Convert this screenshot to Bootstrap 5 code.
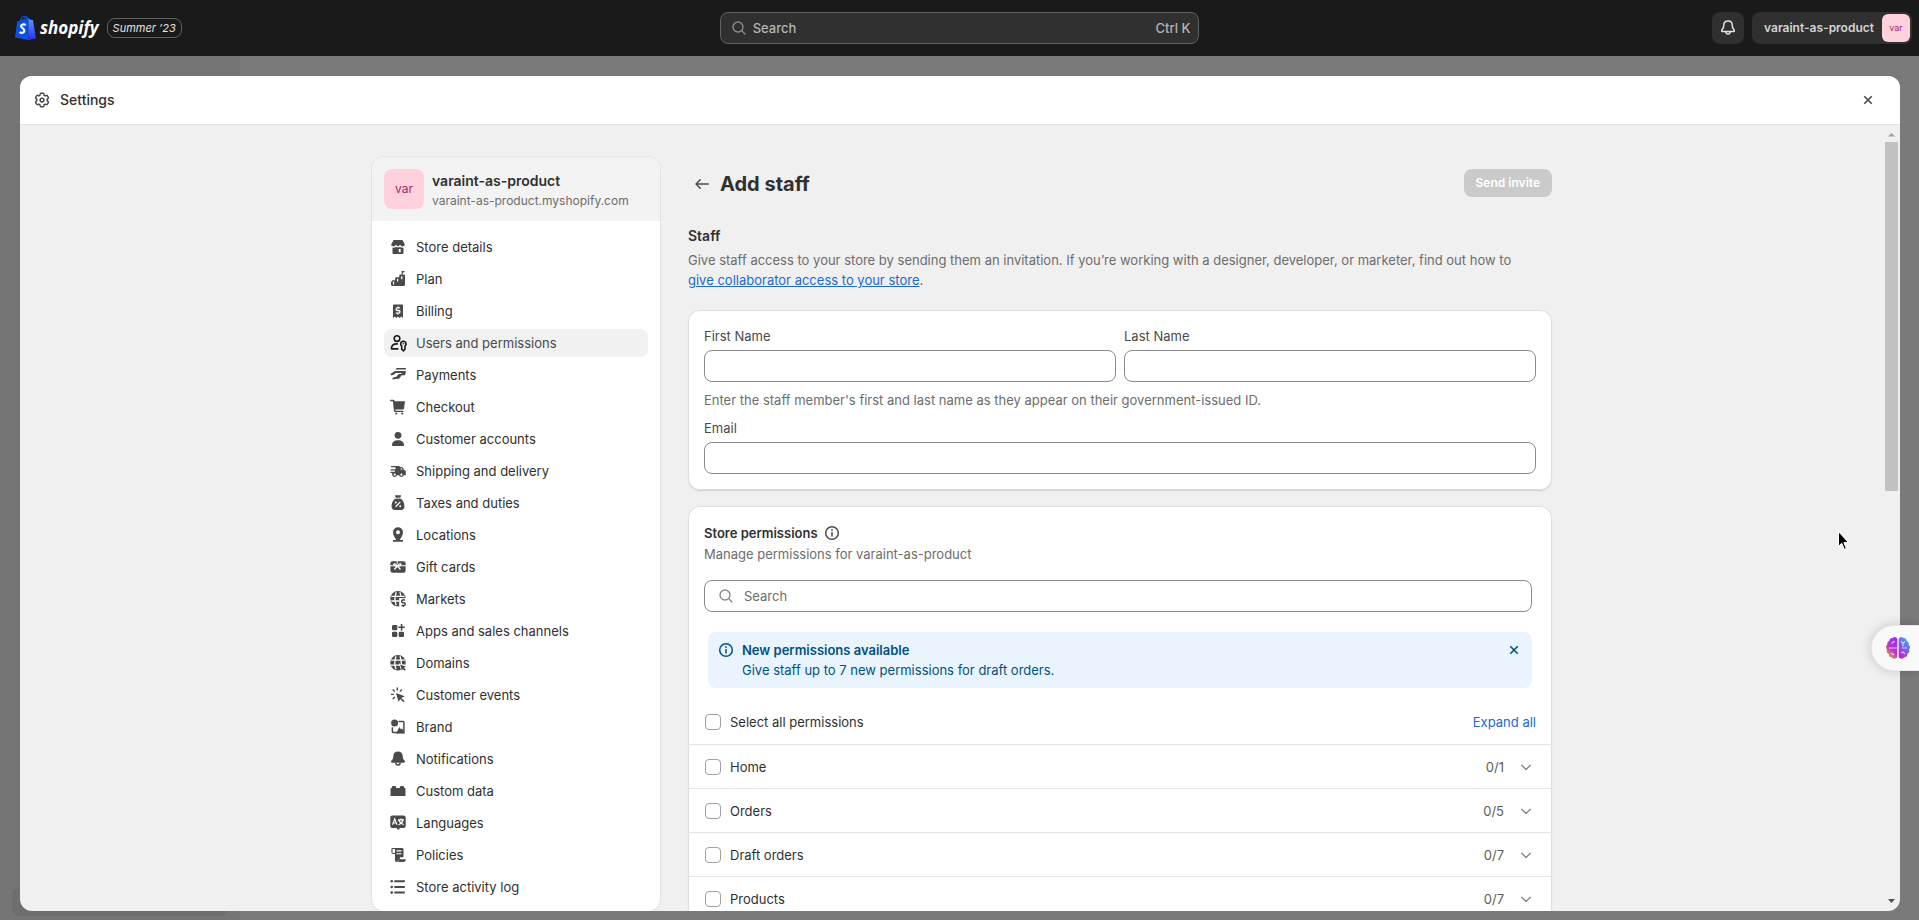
<!DOCTYPE html>
<html lang="en">
<head>
<meta charset="utf-8">
<meta name="viewport" content="width=device-width, initial-scale=1">
<title>Settings - Add staff</title>
<link href="https://cdn.jsdelivr.net/npm/bootstrap@5.3.0/dist/css/bootstrap.min.css" rel="stylesheet">
<style>
body{font-family:Inter,"Liberation Sans",sans-serif;font-size:13px;line-height:20px;color:#303030;background:#7a7a7a}
svg{display:block;flex:none}
.ico{width:20px;height:20px;fill:currentColor}
.topbar{height:56px;background:#1a1a1a;color:#e3e3e3}
.topbar-side{flex:1 1 0;padding:0 7px}
.wordmark{font:italic 700 17px/24px "Open Sans",sans-serif;color:#fff}
.edition{height:20px;line-height:18px;font-size:11px;font-style:italic;border:1px solid #616161;border-radius:8px;padding:0 5px}
.top-search{width:25%;min-width:280px;height:32px;background:#303030;border:1px solid #616161;border-radius:8px;padding:0 8px}
.top-search input{background:transparent;border:0;outline:0;padding:0;color:#b5b5b5;font-size:13px;font-weight:500;min-width:0}
.top-search input::placeholder{color:#b5b5b5;opacity:1}
.top-search kbd{font:500 13px/20px Inter,"Liberation Sans",sans-serif;color:#b5b5b5}
.top-btn{height:32px;border:0;border-radius:8px;background:#303030;color:#e3e3e3}
.account{font-size:12px;font-weight:600;color:#d4d4d4;padding:0 2px 0 12px}
.avatar{background:#ffd1dc;color:#a5266b}
.avatar-sm{width:28px;height:28px;border-radius:6px;font-size:9px;line-height:28px;text-align:center}
.avatar-lg{width:40px;height:40px;border-radius:8px;font-size:12px;line-height:40px;text-align:center}
.backdrop-nav{width:240px;top:56px;bottom:0;left:0;background:#757575}
.backdrop-item{height:28px;margin:0 12px 4px;border-radius:8px;background:#6e6e6e}
.sheet{margin:20px 19px 9px 20px;border-radius:12px;background:#f0f0f0;min-height:0}
.sheet-head{height:49px;background:#fff;border-bottom:1px solid #e3e3e3;padding:0 22px 0 12px}
.plain{border:0;background:transparent;padding:0;color:#4a4a4a}
.scroll-area{padding:32px 0 0 21px}
.layout{max-width:1180px}
.side{width:288px}
.panel{background:#fff;border-radius:12px;box-shadow:inset 0 0 0 1px #dfdfdf,0 1px 1px #cfcfcf}
.side .panel{box-shadow:0 0 0 1px #e2e2e2}
.store-head{background:#f3f3f3;height:64px;padding:0 12px}
.store-url{font-size:12px}
.side-list{padding:12px 12px 10px;display:grid;gap:4px}
.side-list a{height:28px;padding:0 4px;gap:8px;border-radius:8px;color:#303030;text-decoration:none}
.side-list a .ico{color:#4a4a4a}
.side-list a.active{background:#f1f1f1;color:#4a4a4a}
.side-list a.active .ico{color:#1a1a1a}
.main-head{min-height:30px;margin-top:12px}
h1{font-size:20px;line-height:28px;font-weight:700}
.intro{padding:27px 0 20px}
.h-sec{font-size:14px;line-height:20px;font-weight:600}
.h-small{font-size:13px;line-height:20px;font-weight:600}
.perm-title{height:22px}
.sub{color:#6d6d6d}
.lbl{color:#4a4a4a}
.muted-ico{color:#8a8a8a}
.blue{color:#1a69d4}
.invite{height:28px;border:0;border-radius:8px;background:#cacaca;color:#fff;font-size:12px;font-weight:600;padding:0 12px}
.field{height:32px;border:1px solid #8a8a8a;border-radius:8px;background:#fff;font-size:13px;padding:0 12px}
.field:focus{box-shadow:none}
.search-field{gap:8px;padding:0 12px 0 11px}
.search-field input{border:0;outline:0;padding:0;min-width:0}
.search-field input::placeholder{color:#6d6d6d;opacity:1}
.notice{background:#eaf4ff;color:#00527c;border-radius:8px;padding:8px;gap:6px;margin:20px 0 0 4px}
.perm-list{margin-top:12px}
.perm{height:44px;padding:0 16px 0 17px}
.perm + .perm{border-top:1px solid #e3e3e3}
.perm label{padding-left:9px}
.perm .form-check-input{width:16px;height:16px;margin:0;border:1px solid #a0a0a0;border-radius:4px}
.count{color:#5c5c5c;margin-right:12px}
.chev{color:#8a8a8a}
.bar{width:17px;padding:8px 2px 6px}
.thumb{height:349px;background:#c1c1c1}
.pointer{left:1838px;top:531px}
.assist{right:0;top:625px;width:48px;height:46px;border:1px solid #e8e8e8;border-right:0;border-radius:23px 0 0 23px;background:#f9f9f9;box-shadow:0 0 12px rgba(0,0,0,.18);padding:0 0 0 14px}
</style>
</head>
<body class="vh-100 overflow-hidden d-flex flex-column position-relative">

<svg width="0" height="0" class="position-absolute" aria-hidden="true">
<defs>
<symbol id="i-store" viewBox="0 0 20 20"><path d="M5.600 3h8.800l2.300 4.200v.8a2.200 2.200 0 0 1-1.200 1.800V16a1 1 0 0 1-1 1h-9a1 1 0 0 1-1-1V9.800A2.200 2.200 0 0 1 3.300 8v-.8z"/><path d="M3.800 9.200a2.200 2.200 0 0 0 4-.9 2.300 2.300 0 0 0 4.400 0 2.200 2.200 0 0 0 4 .9" fill="none" stroke="#fff" stroke-width="1.300"/><path d="M10.700 12h2v3.300h-2z" fill="#fff"/></symbol>
<symbol id="i-plan" viewBox="0 0 20 20"><path d="M3 12.600h1l.3-1.300h2.900V9.500l.4-1.200h3.600V6.700l.6-1.200h4.400l.8.800V16l-1 1H4l-1-1z"/><path d="M13.600 2h3.200l-.8 1.500h-1.300v2.200h-1.100z"/><path d="M4.900 12.800h1.200v2.600H4.900zM9 9.800h1.200v2.600H9zM13.100 7.200h1.300v3h-1.300z" fill="#fff"/></symbol>
<symbol id="i-bill" viewBox="0 0 20 20"><path d="M5 4.600c0-.7.500-1.100 1.100-1.100h7.800c.6 0 1.100.4 1.100 1.100V17l-1.800-1.500L11.700 17 10 15.500 8.300 17l-1.500-1.500L5 17z"/><path d="M12.100 6.900H9.400a1.300 1.300 0 0 0 0 2.600h1.200a1.300 1.300 0 0 1 0 2.700H7.800M10 5.500v1.400m0 5.300v1.300" fill="none" stroke="#fff" stroke-width="1.300"/></symbol>
<symbol id="i-users" viewBox="0 0 20 20"><g fill="none" stroke="currentColor" stroke-width="1.600"><circle cx="9" cy="5.600" r="2.800"/><path d="M10.400 15.900H4.200a.8.800 0 0 1-.8-.9c.4-2.600 2.500-4.100 5.200-4.100h1.200"/><path d="M13.700 13.100a2.700 2.700 0 1 1 3.300 0v3.100l-1.600 1.600-1.700-1.600z"/></g><circle cx="15.400" cy="10.700" r=".8"/></symbol>
<symbol id="i-pay" viewBox="0 0 20 20"><path d="M7.400 4.400 8.600 3.100h9.300v1.300zM6.900 6h11l-.5 3.300c-.1.600-.5.900-1 .9h-2.800l-1.900 2.700c-.4.600-.9.800-1.500.9l-5.700.6v-1.600l3.800-1 2.300-2.800h3L13.300 8H9.600c-1.700 0-2.600.4-3.500 1.400l-2.900 1-.8-1.400z"/></symbol>
<symbol id="i-cart" viewBox="0 0 20 20"><path d="M2.200 2.700h3.200c.7 0 1 .3 1.100.9l.1.600H17l-1 7.300c-.1.600-.5.900-1.100.9H7.300l.2 1.300h7.900V15H7.300c-.7 0-1.200-.4-1.300-1.100L4.900 4.300H2.200z"/><circle cx="8.300" cy="16.500" r="1.100"/><circle cx="14.200" cy="16.500" r="1.100"/></symbol>
<symbol id="i-person" viewBox="0 0 20 20"><circle cx="10" cy="6.300" r="3.400"/><path d="M4 16.200c0-3.200 2.300-5 6-5s6 1.800 6 5c0 .5-.3.800-.8.800H4.800c-.5 0-.8-.3-.8-.8z"/></symbol>
<symbol id="i-truck" viewBox="0 0 20 20"><path d="M3 5h8.700v1h1.600c1.600 0 2.100 1.300 2.700 3l1.800.8v4.400h-2a2.500 2.500 0 0 1-4.800 0H9a2.500 2.500 0 0 1-4.800 0V12H2.500v-1.300H7V9.500H2.500V8.200h5v-2H3z"/><circle cx="6.700" cy="13.700" r="1.100" fill="#fff"/><circle cx="13.400" cy="13.700" r="1.100" fill="#fff"/><path d="M12.700 7.200h1l.8 1.600h-1.800z" fill="#fff"/></symbol>
<symbol id="i-tax" viewBox="0 0 20 20"><path d="M7 2.200h6l-.7 3c3.600 2.600 4.200 6 4.100 8.600-.1 2-1.200 3.200-3.200 3.200H6.800c-2 0-3.100-1.200-3.200-3.200-.1-2.600.5-6 4.100-8.600z"/><path d="M7 5.200h6" stroke="#fff" stroke-width=".9"/><path d="m7.700 13.700 4.600-4.800" stroke="#fff" stroke-width="1.300"/><circle cx="7.800" cy="9.500" r="1" fill="#fff"/><circle cx="12.200" cy="13.200" r="1" fill="#fff"/></symbol>
<symbol id="i-pin" viewBox="0 0 20 20"><path fill-rule="evenodd" d="M10 2.300a5 5 0 0 1 5 5c0 3.500-2 5.300-3.300 7.600h3.200v1.800H5v-1.800h3.300C7 12.600 5 10.800 5 7.300a5 5 0 0 1 5-5zm0 3a2 2 0 1 0 0 4 2 2 0 0 0 0-4z"/></symbol>
<symbol id="i-gift" viewBox="0 0 20 20"><rect x="2.400" y="4.300" width="15.200" height="11.500" rx="2"/><path d="M2 8.800h16M9.200 4.200v2.500" stroke="#fff" stroke-width="1.100"/><path d="M9.300 9C7.600 6 5.500 6.500 5.800 7.900c.2 1 2.200 1.200 3.500 1.100 1.500.1 3.500-.1 3.700-1.100.3-1.400-2-1.900-3.700 1.100zl-3 3.500M9.300 9l3.200 3.500" fill="none" stroke="#fff" stroke-width="1.300"/></symbol>
<symbol id="i-market" viewBox="0 0 20 20"><circle cx="10" cy="9.700" r="7.700"/><path d="M3.300 7.400h13.400M3.300 12h8M8.300 3.200c-1.800 4.300-1.800 8.700 0 13M11.800 3.200c.7 1.600 1.100 3 1.200 4.500" fill="none" stroke="#fff" stroke-width="1.300"/><path d="M11.200 9h7v9.800h-7z" fill="#fff"/><path d="M17 11h-2a1.400 1.400 0 0 0 0 2.800h.8a1.400 1.400 0 0 1 0 2.800h-2.300M15.400 9.700V11m0 5.600V18" fill="none" stroke="currentColor" stroke-width="1.500"/></symbol>
<symbol id="i-apps" viewBox="0 0 20 20"><rect x="4" y="4" width="5.300" height="5.300" rx="1.200"/><rect x="4" y="10.700" width="5.300" height="5.300" rx="1.200"/><rect x="10.700" y="10.700" width="5.300" height="5.300" rx="1.200"/><path d="M13.600 3v6.400M10.400 6.200h6.400" stroke="currentColor" stroke-width="1.600"/></symbol>
<symbol id="i-domain" viewBox="0 0 20 20"><circle cx="10" cy="9.700" r="7.700"/><path d="M3 7.200h14M3 12.200h14M8 3.200c-1.600 4.300-1.600 8.700 0 13M12 3.200c1 2.600 1.500 5 1.300 8" fill="none" stroke="#fff" stroke-width="1.300"/><path d="m10.900 10.400 8 2.300v6l-5.300.3z" fill="#fff"/><path d="m12.200 11.600 5.800 2.200-2 1 1.800 1.900-1.100 1.100-1.900-1.800-.9 1.700z"/></symbol>
<symbol id="i-event" viewBox="0 0 20 20"><path d="m8 7.900 8.800 3.300-3.500 1.800 3.300 3.200-1.200 1.100-3.200-3.200-1.600 3z"/><path d="M9.300 2.600v3M4.700 4.500l2 2.100M2.900 9.400h3M4.800 14l2-2.100M13.800 4.500l-1.900 2.100" fill="none" stroke="currentColor" stroke-width="1.400"/></symbol>
<symbol id="i-brand" viewBox="0 0 20 20"><circle cx="6.600" cy="6" r="3.500"/><path d="M10.400 4.400H15c.5 0 .9.400.9.900v10.300H5.200a.8.800 0 0 1-.8-.8v-4.600" fill="none" stroke="currentColor" stroke-width="1.500"/><path d="m8 16.400 3.400-6.500 1.700 2.600 1-1.300 2.500 5.200z"/></symbol>
<symbol id="i-bell" viewBox="0 0 20 20"><path d="M10 2.500c3 0 4.600 2 4.700 4.400 0 2.300.6 3.500 1.800 4.700.8.900.6 2.200-.8 2.200H4.300c-1.400 0-1.600-1.300-.8-2.200C4.700 10.400 5.300 9.200 5.300 6.900 5.400 4.500 7 2.500 10 2.500z"/><path d="M7.800 13.800a2.200 2.200 0 1 0 4.400 0" fill="none" stroke="currentColor" stroke-width="1.500"/></symbol>
<symbol id="i-data" viewBox="0 0 20 20"><path d="M2.500 8.200c0-.8.400-1.200 1.100-1.200h.3V5.700l.8-.8h2.600l.8.800V7h3.800V5.700l.8-.8h2.600l.8.800V7h.3c.7 0 1.100.4 1.100 1.200v6.700H2.500z"/></symbol>
<symbol id="i-lang" viewBox="0 0 20 20"><path d="M4.500 2.600h11c1.400 0 2.200.8 2.200 2.200v8c0 1.400-.8 2.200-2.200 2.200h-3.400L10 17l-1.400-2H4.500c-1.400 0-2.200-.8-2.200-2.200v-8c0-1.400.8-2.200 2.200-2.200z"/><path d="m4.500 11.800 2.200-5.900 2.300 5.900M5.300 10h2.900M10 6.900h6M13 5.400v1.500m2 .2c-.6 2.100-2.200 3.700-4.600 4.600m.4-4.400c.8 2.200 2.400 3.600 4.800 4.400" fill="none" stroke="#fff" stroke-width="1.200"/></symbol>
<symbol id="i-policy" viewBox="0 0 20 20"><path d="M4.500 3h9.300c1 0 1.700.7 1.700 1.700v7.600h-3.700v3.200h-2V17H9c-1.400 0-2-.7-2-2V9H5.200C4 9 3.400 8.300 3.400 7V4.400C3.400 3.500 3.800 3 4.500 3z"/><path d="M5.100 4.600v2.800h1.300V4.600zM8.500 5.900h5M8.500 8.800h5" stroke="#fff" stroke-width="1.100" fill="#fff"/><path d="M11 14.300h6.800c0 1.600-.8 2.700-2.400 2.700H9.500c1 0 1.500-1 1.500-2.700z"/></symbol>
<symbol id="i-log" viewBox="0 0 20 20"><circle cx="3.700" cy="4.300" r="1.300"/><circle cx="3.700" cy="10" r="1.300"/><circle cx="3.700" cy="15.600" r="1.300"/><path d="M6.300 4.300h10.500M6.300 10h10.500M6.300 15.600h10.500" stroke="currentColor" stroke-width="2"/></symbol>
<symbol id="i-search" viewBox="0 0 20 20"><g fill="none" stroke="currentColor" stroke-width="1.400" stroke-linecap="round"><circle cx="9" cy="9" r="5"/><path d="m12.800 12.800 3.200 3.200"/></g></symbol>
<symbol id="i-info" viewBox="0 0 20 20"><circle cx="10" cy="10" r="6.300" fill="none" stroke="currentColor" stroke-width="1.500"/><circle cx="10" cy="7" r=".9"/><path d="M10 9.100v4.500" stroke="currentColor" stroke-width="1.500"/></symbol>
<symbol id="i-close" viewBox="0 0 20 20"><path d="m6.300 6.300 7.400 7.400m0-7.400-7.400 7.400" fill="none" stroke="currentColor" stroke-width="1.600"/></symbol>
<symbol id="i-down" viewBox="0 0 20 20"><path d="m5.700 8.200 4.300 4.200 4.300-4.200" fill="none" stroke="currentColor" stroke-width="1.400" stroke-linecap="round"/></symbol>
<symbol id="i-back" viewBox="0 0 20 20"><path d="M16.200 10H4.200m4-4.200L4 10l4.200 4.200" fill="none" stroke="currentColor" stroke-width="1.500" stroke-linecap="round" stroke-linejoin="round"/></symbol>
</defs>
</svg>

<div class="backdrop-nav position-absolute d-flex flex-column justify-content-end" aria-hidden="true"><div class="backdrop-item"></div></div>

<header class="topbar d-flex align-items-center position-relative flex-shrink-0">
  <div class="topbar-side d-flex align-items-center">
    <svg class="ms-2" width="21" height="26" viewBox="0 0 21 26" aria-hidden="true"><defs><linearGradient id="bag" x1="0" y1="0" x2="0" y2="1"><stop offset="0" stop-color="#5b9bff"/><stop offset="1" stop-color="#2a2ff0"/></linearGradient></defs><path d="M5.500 7c.3-3.300 2-5.700 3.900-5.700 1.500 0 2.300 1.500 2.500 4.200M8 6.500C8.400 3.500 9.800 1.600 11.300 1.900c1.200.2 1.900 1.300 2.200 3" fill="none" stroke="#1150d8" stroke-width="1.100"/><path d="m2.200 6.300 11.500-3-.4 21.700L0 22.500z" fill="#0a50e6"/><path d="m13.600 3.300 1.800 1.500 2.500.2L21 23.500 13.300 25z" fill="url(#bag)"/><path d="M10.700 10c-2.100-1.200-4.700-.6-4.600 1.300.1 1.700 3.500 2 3.300 4.400-.2 2.200-2.700 2.900-4.900 1.400" fill="none" stroke="#fff" stroke-width="2.100"/></svg>
    <span class="wordmark ms-1 me-2">shopify</span>
    <span class="edition">Summer ’23</span>
  </div>
  <div class="top-search d-flex align-items-center gap-1">
    <svg class="ico muted-ico"><use href="#i-search"/></svg>
    <input class="flex-grow-1" type="search" placeholder="Search" aria-label="Search">
    <kbd class="bg-transparent p-0">Ctrl K</kbd>
  </div>
  <div class="topbar-side d-flex align-items-center justify-content-end gap-2">
    <button class="top-btn px-2 d-flex align-items-center" type="button" aria-label="Notifications"><svg width="16" height="18" viewBox="0 0 16 18" fill="none" stroke="#e3e3e3" stroke-width="1.500" stroke-linejoin="round"><path d="M8 2c2.700 0 4.200 1.700 4.200 4 0 2.400.6 3.600 1.700 4.800.8.900.5 1.700-.5 1.700H2.600c-1 0-1.300-.8-.5-1.700C3.200 9.600 3.800 8.400 3.800 6 3.800 3.700 5.300 2 8 2zM6 13a2 2 0 0 0 4 0"/></svg></button>
    <button class="top-btn account d-flex align-items-center gap-2" type="button"><span>varaint-as-product</span><span class="avatar avatar-sm fw-normal">var</span></button>
  </div>
</header>

<section class="sheet position-relative flex-grow-1 d-flex flex-column overflow-hidden">
  <div class="sheet-head d-flex align-items-center justify-content-between flex-shrink-0">
    <div class="d-flex align-items-center gap-2">
      <svg width="20" height="20" viewBox="0 0 24 24" fill="none" stroke="#4a4a4a"><g transform="translate(1.200 1.200) scale(.9)" stroke-width="2"><path d="M9.594 3.940c.09-.542.560-.940 1.110-.940h2.593c.550 0 1.020.398 1.110.940l.213 1.281c.063.374.313.686.645.870.074.040.147.083.220.127.325.196.720.257 1.075.124l1.217-.456a1.125 1.125 0 0 1 1.370.490l1.296 2.247a1.125 1.125 0 0 1-.260 1.431l-1.003.827c-.293.241-.438.613-.430.992a7.723 7.723 0 0 1 0 .255c-.008.378.137.750.430.991l1.004.827c.424.350.534.955.260 1.430l-1.298 2.247a1.125 1.125 0 0 1-1.369.491l-1.217-.456c-.355-.133-.750-.072-1.076.124a6.470 6.470 0 0 1-.220.128c-.331.183-.581.495-.644.869l-.213 1.281c-.090.543-.560.940-1.110.940h-2.594c-.550 0-1.019-.398-1.110-.940l-.213-1.281c-.062-.374-.312-.686-.644-.870a6.520 6.520 0 0 1-.220-.127c-.325-.196-.720-.257-1.076-.124l-1.217.456a1.125 1.125 0 0 1-1.369-.490l-1.297-2.247a1.125 1.125 0 0 1 .260-1.431l1.004-.827c.292-.240.437-.613.430-.991a6.932 6.932 0 0 1 0-.255c.007-.380-.138-.751-.430-.992l-1.004-.827a1.125 1.125 0 0 1-.260-1.430l1.297-2.247a1.125 1.125 0 0 1 1.370-.491l1.216.456c.356.133.751.072 1.076-.124.072-.044.146-.086.220-.128.332-.183.582-.495.644-.869z"/><circle cx="12" cy="12" r="2.500"/></g></svg>
      <h2 class="h-sec fw-medium mb-0">Settings</h2>
    </div>
    <button class="plain" type="button" aria-label="Close"><svg class="ico"><use href="#i-close"/></svg></button>
  </div>

  <div class="d-flex flex-grow-1 overflow-hidden">
    <div class="scroll-area flex-grow-1 overflow-hidden">
      <div class="layout mx-auto d-flex align-items-start">
        <aside class="side flex-shrink-0 me-4">
          <div class="panel overflow-hidden">
            <div class="store-head d-flex align-items-center gap-2">
              <div class="avatar avatar-lg">var</div>
              <div class="pt-1"><div class="h-sec">varaint-as-product</div><div class="sub store-url">varaint-as-product.myshopify.com</div></div>
            </div>
            <nav class="side-list">
              <a class="d-flex align-items-center" href="#"><svg class="ico"><use href="#i-store"/></svg>Store details</a>
              <a class="d-flex align-items-center" href="#"><svg class="ico"><use href="#i-plan"/></svg>Plan</a>
              <a class="d-flex align-items-center" href="#"><svg class="ico"><use href="#i-bill"/></svg>Billing</a>
              <a class="d-flex align-items-center active" href="#" aria-current="page"><svg class="ico"><use href="#i-users"/></svg>Users and permissions</a>
              <a class="d-flex align-items-center" href="#"><svg class="ico"><use href="#i-pay"/></svg>Payments</a>
              <a class="d-flex align-items-center" href="#"><svg class="ico"><use href="#i-cart"/></svg>Checkout</a>
              <a class="d-flex align-items-center" href="#"><svg class="ico"><use href="#i-person"/></svg>Customer accounts</a>
              <a class="d-flex align-items-center" href="#"><svg class="ico"><use href="#i-truck"/></svg>Shipping and delivery</a>
              <a class="d-flex align-items-center" href="#"><svg class="ico"><use href="#i-tax"/></svg>Taxes and duties</a>
              <a class="d-flex align-items-center" href="#"><svg class="ico"><use href="#i-pin"/></svg>Locations</a>
              <a class="d-flex align-items-center" href="#"><svg class="ico"><use href="#i-gift"/></svg>Gift cards</a>
              <a class="d-flex align-items-center" href="#"><svg class="ico"><use href="#i-market"/></svg>Markets</a>
              <a class="d-flex align-items-center" href="#"><svg class="ico"><use href="#i-apps"/></svg>Apps and sales channels</a>
              <a class="d-flex align-items-center" href="#"><svg class="ico"><use href="#i-domain"/></svg>Domains</a>
              <a class="d-flex align-items-center" href="#"><svg class="ico"><use href="#i-event"/></svg>Customer events</a>
              <a class="d-flex align-items-center" href="#"><svg class="ico"><use href="#i-brand"/></svg>Brand</a>
              <a class="d-flex align-items-center" href="#"><svg class="ico"><use href="#i-bell"/></svg>Notifications</a>
              <a class="d-flex align-items-center" href="#"><svg class="ico"><use href="#i-data"/></svg>Custom data</a>
              <a class="d-flex align-items-center" href="#"><svg class="ico"><use href="#i-lang"/></svg>Languages</a>
              <a class="d-flex align-items-center" href="#"><svg class="ico"><use href="#i-policy"/></svg>Policies</a>
              <a class="d-flex align-items-center" href="#"><svg class="ico"><use href="#i-log"/></svg>Store activity log</a>
            </nav>
          </div>
        </aside>

        <main class="flex-grow-1 ps-1">
          <div class="main-head d-flex align-items-center justify-content-between">
            <div class="d-flex align-items-center gap-2 ps-1">
              <button class="plain" type="button" aria-label="Back"><svg class="ico"><use href="#i-back"/></svg></button>
              <h1 class="mb-0">Add staff</h1>
            </div>
            <button class="invite align-self-start" type="button" disabled>Send invite</button>
          </div>
          <div class="intro">
            <h2 class="h-sec mb-1">Staff</h2>
            <p class="sub mb-0">Give staff access to your store by sending them an invitation. If you’re working with a designer, developer, or marketer, find out how to <a class="blue text-nowrap" href="#">give collaborator access to your store</a>.</p>
          </div>

          <form class="panel p-3 mb-3">
            <div class="row g-2">
              <div class="col-6"><label class="lbl d-block mb-1" for="first">First Name</label><input class="form-control field" id="first" type="text"></div>
              <div class="col-6"><label class="lbl d-block mb-1" for="last">Last Name</label><input class="form-control field" id="last" type="text"></div>
            </div>
            <div class="sub my-2">Enter the staff member's first and last name as they appear on their government-issued ID.</div>
            <label class="lbl d-block mb-1" for="email">Email</label>
            <input class="form-control field" id="email" type="email">
          </form>

          <div class="panel">
            <div class="p-3 pb-0 pe-0 me-3">
              <div class="me-1">
                <div class="perm-title d-flex align-items-center gap-1"><h3 class="h-small mb-0">Store permissions</h3><svg class="ico lbl"><use href="#i-info"/></svg></div>
                <div class="sub mb-3">Manage permissions for varaint-as-product</div>
                <div class="field search-field d-flex align-items-center"><svg class="ico muted-ico"><use href="#i-search"/></svg><input class="flex-grow-1" type="search" placeholder="Search" aria-label="Search permissions"></div>
                <div class="notice d-flex">
                  <svg class="ico"><use href="#i-info"/></svg>
                  <div class="flex-grow-1"><div class="h-small">New permissions available</div><div>Give staff up to 7 new permissions for draft orders.</div></div>
                  <button class="plain align-self-start text-reset" type="button" aria-label="Dismiss"><svg class="ico"><use href="#i-close"/></svg></button>
                </div>
              </div>
            </div>
            <div class="perm-list">
              <div class="perm d-flex align-items-center"><input class="form-check-input" type="checkbox" id="p0"><label class="flex-grow-1" for="p0">Select all permissions</label><a class="blue text-decoration-none" href="#">Expand all</a></div>
              <div class="perm d-flex align-items-center"><input class="form-check-input" type="checkbox" id="p1"><label class="flex-grow-1" for="p1">Home</label><span class="count">0/1</span><button class="plain chev" type="button" aria-label="Expand Home"><svg class="ico"><use href="#i-down"/></svg></button></div>
              <div class="perm d-flex align-items-center"><input class="form-check-input" type="checkbox" id="p2"><label class="flex-grow-1" for="p2">Orders</label><span class="count">0/5</span><button class="plain chev" type="button" aria-label="Expand Orders"><svg class="ico"><use href="#i-down"/></svg></button></div>
              <div class="perm d-flex align-items-center"><input class="form-check-input" type="checkbox" id="p3"><label class="flex-grow-1" for="p3">Draft orders</label><span class="count">0/7</span><button class="plain chev" type="button" aria-label="Expand Draft orders"><svg class="ico"><use href="#i-down"/></svg></button></div>
              <div class="perm d-flex align-items-center"><input class="form-check-input" type="checkbox" id="p4"><label class="flex-grow-1" for="p4">Products</label><span class="count">0/7</span><button class="plain chev" type="button" aria-label="Expand Products"><svg class="ico"><use href="#i-down"/></svg></button></div>
            </div>
          </div>
        </main>
      </div>
    </div>
    <div class="bar d-flex flex-column" aria-hidden="true">
      <svg width="13" height="9" viewBox="0 0 13 9"><path d="M3 3.500h7L6.500 0z" fill="#a0a0a0"/></svg>
      <div class="thumb"></div>
      <svg class="mt-auto" width="13" height="8" viewBox="0 0 13 8"><path d="M3 2h7L6.500 6z" fill="#505050"/></svg>
    </div>
  </div>
</section>

<svg class="pointer position-absolute" width="14" height="20" viewBox="0 0 14 20" aria-hidden="true"><path d="M.5.500v14.800l3.200-3 2.700 6 2-.9-2.600-5.900h4.600z" fill="#000" stroke="#fff"/></svg>

<button class="assist position-absolute d-flex align-items-center" type="button" aria-label="Assistant">
  <svg width="24" height="24" viewBox="0 0 24 24"><defs><linearGradient id="bl" x1=".7" y1="0" x2=".2" y2="1"><stop offset="0" stop-color="#9333ea"/><stop offset=".5" stop-color="#b535d8"/><stop offset="1" stop-color="#f59e2e"/></linearGradient><linearGradient id="br" x1=".8" y1="0" x2=".3" y2="1"><stop offset="0" stop-color="#3fb0ff"/><stop offset=".55" stop-color="#7c5cf5"/><stop offset="1" stop-color="#c41fd0"/></linearGradient></defs>
  <path d="M11.300 3v18c-1 2-4.400 2.400-5.700.3-1.900.1-3.100-1.400-2.700-3.200C.8 17.200.2 15.400 1 13.600-.4 12.200-.2 9.600 1.300 8.700 1 6.900 1.800 5.500 3.300 5 3.500 2.900 4.900 1.700 6.700 2 8 .2 10.700.7 11.300 3z" fill="url(#bl)"/><path d="M12.700 3v18c1 2 4.400 2.400 5.700.3 1.900.1 3.100-1.400 2.700-3.200 2.100-.9 2.700-2.700 1.900-4.500 1.400-1.400 1.200-4-.3-4.900.3-1.800-.5-3.200-2-3.700-.2-2.100-1.600-3.300-3.400-3C16 .2 13.300.700 12.700 3z" fill="url(#br)"/><path d="M3 12h8M5.500 7.500 8.500 5M5 17l3 2M15 5.500l2 2 2-2M17 7.500v3M16 12h5M15 17l2-1 2 2" fill="none" stroke="#fff" stroke-opacity=".7" stroke-width="1.200"/></svg>
</button>

<script src="https://cdn.jsdelivr.net/npm/bootstrap@5.3.0/dist/js/bootstrap.bundle.min.js"></script>
</body>
</html>
